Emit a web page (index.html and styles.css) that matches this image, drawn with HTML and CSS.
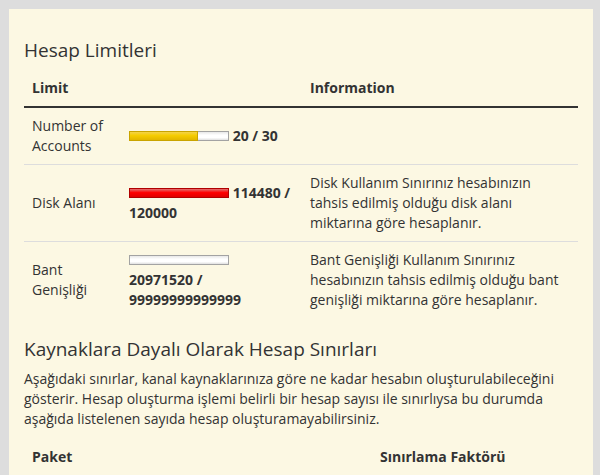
FILE: index.html
```html
<!DOCTYPE html>
<html lang="tr">
<head>
<meta charset="utf-8">
<title>Hesap Limitleri</title>
<link rel="stylesheet" href="styles.css">
</head>
<body>
<div class="panel">
  <h3 class="title">Hesap Limitleri</h3>
  <table class="limits">
    <thead>
      <tr><th class="c1">Limit</th><th class="c2"></th><th class="c3">Information</th></tr>
    </thead>
    <tbody>
      <tr>
        <td>Number of Accounts</td>
        <td><span class="bar"><span class="fill yellow" style="width:70%"></span></span> <b>20 / 30</b></td>
        <td></td>
      </tr>
      <tr>
        <td>Disk Alanı</td>
        <td><span class="bar"><span class="fill red" style="width:100%"></span></span> <b>114480 / 120000</b></td>
        <td>Disk Kullanım Sınırınız hesabınızın tahsis edilmiş olduğu disk alanı miktarına göre hesaplanır.</td>
      </tr>
      <tr>
        <td>Bant Genişliği</td>
        <td><span class="bar"><span class="fill" style="width:0%"></span></span> <b>20971520 / 99999999999999</b></td>
        <td>Bant Genişliği Kullanım Sınırınız hesabınızın tahsis edilmiş olduğu bant genişliği miktarına göre hesaplanır.</td>
      </tr>
    </tbody>
  </table>
  <h3 class="title">Kaynaklara Dayalı Olarak Hesap Sınırları</h3>
  <p class="desc">Aşağıdaki sınırlar, kanal kaynaklarınıza göre ne kadar hesabın oluşturulabileceğini gösterir. Hesap oluşturma işlemi belirli bir hesap sayısı ile sınırlıysa bu durumda aşağıda listelenen sayıda hesap oluşturamayabilirsiniz.</p>
  <table class="limits packages">
    <thead>
      <tr><th class="p1">Paket</th><th class="p2">Sınırlama Faktörü</th></tr>
    </thead>
  </table>
</div>
</body>
</html>
```
FILE: styles.css
```css
html, body {
  margin: 0;
  padding: 0;
}
body {
  background: #dddddd;
  padding: 9px 7px 0 9px;
  font-family: "Open Sans", "Noto Sans", sans-serif;
  font-size: 14px;
  line-height: 20px;
  color: #333333;
}
.panel {
  background: #fcf8e3;
  padding: 30px 15px 40px 15px;
  min-height: 500px;
}
.title {
  font-size: 19px;
  font-weight: 400;
  line-height: 22px;
  margin: 0 0 9px 0;
  color: #333333;
}
.limits {
  width: 100%;
  border-collapse: collapse;
  margin-bottom: 20px;
}
.limits th {
  text-align: left;
  font-weight: 700;
  padding: 8px;
  border-bottom: 2px solid #333333;
  vertical-align: bottom;
}
.limits td {
  padding: 8px;
  border-top: 1px solid #dddddd;
  vertical-align: middle;
}
.limits tbody tr:first-child td {
  border-top: 0;
}
.c1 { width: 81px; }
.c2 { width: 165px; }
.p1 { width: 332px; }
.packages th { border-bottom: 0; }
.bar {
  display: inline-block;
  box-sizing: border-box;
  width: 100px;
  height: 10px;
  vertical-align: middle;
  border: 1px solid #a3a3a3;
  background: linear-gradient(#e8e8e8, #ffffff 40%, #ffffff 70%, #e0e0e0);
  position: relative;
  margin-top: -2px;
}
.fill {
  display: block;
  box-sizing: border-box;
  height: 10px;
  margin: -1px;
}
.fill.yellow {
  border: 1px solid #c9a400;
  background: linear-gradient(#f3d34a, #f5cc00 45%, #e2b600);
}
.fill.red {
  width: calc(100% + 2px) !important;
  border: 1px solid #b00000;
  background: linear-gradient(#e07070, #ff0000 45%, #e00000);
}
.desc {
  margin: 0 0 10px 0;
}
```
